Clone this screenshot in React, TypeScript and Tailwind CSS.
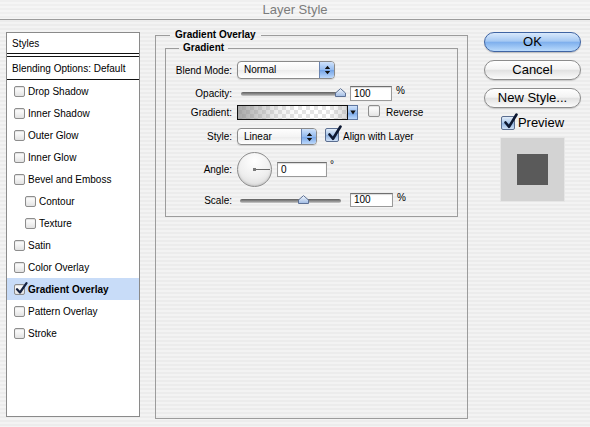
import React from "react";

function SmallCheck({ checked = false }: { checked?: boolean }) {
  return (
    <span className="relative inline-block h-[11px] w-[11px] shrink-0 rounded-[2px] border border-[#8d8d8d] bg-[linear-gradient(to_bottom,#ffffff,#f2f2f2_50%,#e2e2e2)] shadow-[inset_0_1px_1px_rgba(0,0,0,0.12)]">
      {checked && (
        <svg className="absolute left-[0px] top-[-3px]" width="13" height="13" viewBox="0 0 13 13">
          <path d="M2 7.2 L5 10.5 L11.5 1.2" fill="none" stroke="#14213f" strokeWidth="2.2" strokeLinecap="round" strokeLinejoin="round" />
        </svg>
      )}
    </span>
  );
}

function BigCheck({ checked = false }: { checked?: boolean }) {
  if (!checked) {
    return (
      <span className="inline-block h-[12px] w-[12px] shrink-0 rounded-[2px] border border-[#8d8d8d] bg-[linear-gradient(to_bottom,#ffffff,#f3f3f3_50%,#e3e3e3)] shadow-[inset_0_1px_1px_rgba(0,0,0,0.12)]" />
    );
  }
  return (
    <span className="relative inline-block h-[14px] w-[14px] shrink-0 rounded-[2px] border border-[#5b6e90] bg-[linear-gradient(to_bottom,#e3edf9,#a9c6ea_50%,#8fb3e1_51%,#cfe0f6)]">
      <svg className="absolute left-[1px] top-[-4px]" width="15" height="16" viewBox="0 0 15 16">
        <path d="M2.5 9.5 L6 13.8 L13.5 1.5" fill="none" stroke="#0d1832" strokeWidth="2.6" strokeLinecap="round" strokeLinejoin="round" />
      </svg>
    </span>
  );
}

function Stepper() {
  return (
    <span className="flex w-[15px] items-center justify-center border-l border-[#6a84b0] bg-[linear-gradient(to_bottom,#cfe2fb,#94bbef_50%,#74a4e7_51%,#bcd8fb)]">
      <svg width="7" height="10" viewBox="0 0 7 10">
        <path d="M3.5 0.8 L6.2 4 H0.8 Z M3.5 9.2 L6.2 6 H0.8 Z" fill="#111" />
      </svg>
    </span>
  );
}

function Thumb() {
  return (
    <svg width="11" height="9" viewBox="0 0 11 9">
      <defs>
        <linearGradient id="thumbg" x1="0" y1="0" x2="0" y2="1">
          <stop offset="0" stopColor="#f4f8fd" />
          <stop offset="1" stopColor="#9fbbe4" />
        </linearGradient>
      </defs>
      <path d="M0.5 8.5 V5 L5.5 0.6 L10.5 5 V8.5 Z" fill="url(#thumbg)" stroke="#5d7196" strokeWidth="1" />
    </svg>
  );
}

function ListRow({
  label,
  checked = false,
  indent = false,
  selected = false,
}: {
  label: string;
  checked?: boolean;
  indent?: boolean;
  selected?: boolean;
}) {
  return (
    <div
      className={
        selected
          ? "flex h-[22px] items-center gap-[3px] bg-[#c8dcf8] pl-[7px] font-bold"
          : indent
          ? "flex h-[22px] items-center gap-[3px] pl-[18px]"
          : "flex h-[22px] items-center gap-[3px] pl-[7px]"
      }
    >
      <SmallCheck checked={checked} />
      <span>{label}</span>
    </div>
  );
}

export default function App() {
  return (
    <div className="flex h-[427px] w-[590px] flex-col overflow-hidden bg-[image:repeating-linear-gradient(to_bottom,#ececec_0px,#ececec_2px,#f3f3f3_2px,#f3f3f3_4px)] font-['Liberation_Sans',Arial,sans-serif] text-[10px] text-black">
      {/* Title bar */}
      <div className="h-[20px] shrink-0 border-b border-[#9c9c9c] bg-[image:repeating-linear-gradient(to_bottom,#efefef_0px,#efefef_2px,#f5f5f5_2px,#f5f5f5_4px)] text-center text-[13px] leading-[19px] text-[#7c7c7c]">
        Layer Style
      </div>

      <div className="flex items-start">
        {/* Styles list */}
        <div className="ml-[6px] mt-[12px] h-[385px] w-[134px] shrink-0 border border-[#8a8a8a] bg-white">
          <div className="flex h-[21px] items-center border-b border-[#111] pl-[5px]">Styles</div>
          <div className="flex h-[24px] items-center border-y border-[#111] pl-[5px] mt-[2px]">Blending Options: Default</div>
          <ListRow label="Drop Shadow" />
          <ListRow label="Inner Shadow" />
          <ListRow label="Outer Glow" />
          <ListRow label="Inner Glow" />
          <ListRow label="Bevel and Emboss" />
          <ListRow label="Contour" indent />
          <ListRow label="Texture" indent />
          <ListRow label="Satin" />
          <ListRow label="Color Overlay" />
          <ListRow label="Gradient Overlay" checked selected />
          <ListRow label="Pattern Overlay" />
          <ListRow label="Stroke" />
        </div>

        {/* Main panel */}
        <fieldset className="ml-[15px] mt-[9px] h-[390px] w-[313px] shrink-0 border border-[#9c9c9c]">
          <legend className="ml-[14px] px-[5px] text-[10px] font-bold leading-[12px]">Gradient Overlay</legend>
          <fieldset className="ml-[9px] mt-[1px] h-[175px] w-[293px] border border-[#9c9c9c]">
            <legend className="ml-[13px] px-[4px] text-[10px] font-bold leading-[12px]">Gradient</legend>
            <div className="flex flex-col pt-[7px]">
              {/* Blend mode */}
              <div className="flex h-[18px] items-center">
                <span className="w-[66px] text-right">Blend Mode:</span>
                <div className="ml-[5px] flex h-[18px] w-[98px] overflow-hidden rounded-[4px] border border-[#8a8a8a] bg-[linear-gradient(to_bottom,#ffffff,#f4f4f4_50%,#ececec_51%,#ffffff)] shadow-[0_1px_1px_rgba(0,0,0,0.12)]">
                  <span className="flex-1 pl-[6px] leading-[16px]">Normal</span>
                  <Stepper />
                </div>
              </div>

              {/* Opacity */}
              <div className="mt-[7px] flex h-[15px] items-center">
                <span className="w-[66px] text-right">Opacity:</span>
                <div className="relative ml-[7px] h-[15px] w-[107px]">
                  <div className="absolute left-[2px] right-[6px] top-[6px] h-[4px] rounded-full bg-[linear-gradient(to_bottom,#5f5f5f,#959595_60%,#cdcdcd)]" />
                  <div className="absolute left-[96px] top-[2px] flex">
                    <Thumb />
                  </div>
                </div>
                <div className="ml-[4px] h-[15px] w-[42px] border border-[#9a9a9a] border-t-[#6f6f6f] bg-white pl-[3px] leading-[13px] shadow-[inset_0_1px_1px_rgba(0,0,0,0.15)]">100</div>
                <span className="ml-[4px] self-start leading-[10px]">%</span>
              </div>

              {/* Gradient */}
              <div className="mt-[4px] flex h-[15px] items-center">
                <span className="w-[66px] text-right">Gradient:</span>
                <div className="ml-[5px] flex h-[15px]">
                  <div className="h-[15px] w-[111px] border border-[#111] bg-[image:linear-gradient(to_right,rgba(140,140,140,0.75),rgba(160,160,160,0.2)_35%,rgba(160,160,160,0)_55%,rgba(160,160,160,0)_85%,rgba(140,140,140,0.35)),repeating-conic-gradient(#e4e4e4_0%_25%,#ffffff_0%_50%)] bg-[length:100%_100%,8px_8px]" />
                  <div className="flex h-[15px] w-[10px] items-center justify-center border border-l-0 border-[#5f77a0] bg-[linear-gradient(to_bottom,#cfe2fb,#94bbef_50%,#74a4e7_51%,#bcd8fb)]">
                    <svg width="6" height="5" viewBox="0 0 6 5">
                      <path d="M0.3 0.5 H5.7 L3 4.6 Z" fill="#111" />
                    </svg>
                  </div>
                </div>
                <span className="ml-[10px]">
                  <BigCheck />
                </span>
                <span className="ml-[6px]">Reverse</span>
              </div>

              {/* Style */}
              <div className="mt-[8px] flex h-[17px] items-center">
                <span className="w-[66px] text-right">Style:</span>
                <div className="ml-[5px] flex h-[17px] w-[80px] overflow-hidden rounded-[4px] border border-[#8a8a8a] bg-[linear-gradient(to_bottom,#ffffff,#f4f4f4_50%,#ececec_51%,#ffffff)] shadow-[0_1px_1px_rgba(0,0,0,0.12)]">
                  <span className="flex-1 pl-[6px] leading-[15px]">Linear</span>
                  <Stepper />
                </div>
                <span className="ml-[8px]">
                  <BigCheck checked />
                </span>
                <span className="ml-[4px]">Align with Layer</span>
              </div>

              {/* Angle */}
              <div className="mt-[7px] flex h-[35px] items-center">
                <span className="w-[66px] text-right">Angle:</span>
                <div className="relative ml-[5px] h-[35px] w-[35px] rounded-full border border-[#8c8c8c] bg-[radial-gradient(circle_at_50%_25%,#ffffff,#efefef_55%,#d4d4d4)] shadow-[inset_0_-1px_2px_rgba(0,0,0,0.12)]">
                  <svg className="absolute left-0 top-0" width="33" height="33" viewBox="0 0 33 33">
                    <line x1="16.5" y1="16.5" x2="32" y2="16.5" stroke="#6a6a6a" strokeWidth="1" />
                    <rect x="15" y="15" width="3" height="3" fill="#7a7a7a" />
                  </svg>
                </div>
                <div className="ml-[5px] h-[15px] w-[50px] border border-[#9a9a9a] border-t-[#6f6f6f] bg-white pl-[3px] leading-[13px] shadow-[inset_0_1px_1px_rgba(0,0,0,0.15)]">0</div>
                <span className="ml-[3px] mt-[-10px] leading-[10px]">°</span>
              </div>

              {/* Scale */}
              <div className="mt-[6px] flex h-[14px] items-center">
                <span className="w-[66px] text-right">Scale:</span>
                <div className="relative ml-[7px] h-[14px] w-[103px]">
                  <div className="absolute left-[1px] right-[1px] top-[6px] h-[4px] rounded-full bg-[linear-gradient(to_bottom,#5f5f5f,#959595_60%,#cdcdcd)]" />
                  <div className="absolute left-[59px] top-[2px] flex">
                    <Thumb />
                  </div>
                </div>
                <div className="ml-[8px] h-[14px] w-[43px] border border-[#9a9a9a] border-t-[#6f6f6f] bg-white pl-[3px] leading-[12px] shadow-[inset_0_1px_1px_rgba(0,0,0,0.15)]">100</div>
                <span className="ml-[4px] self-start leading-[10px]">%</span>
              </div>
            </div>
          </fieldset>
        </fieldset>

        {/* Buttons */}
        <div className="ml-[16px] mt-[12px] flex w-[97px] shrink-0 flex-col items-center">
          <button className="h-[20px] w-[97px] rounded-full border border-[#3f64a3] bg-[linear-gradient(to_bottom,#d9e9fc,#a6c9f3_45%,#7fb0ed_52%,#b9dafc)] text-[13px] leading-[18px] shadow-[0_1px_1px_rgba(0,0,0,0.2)]">
            OK
          </button>
          <button className="mt-[8px] h-[20px] w-[97px] rounded-full border border-[#8c8c8c] bg-[linear-gradient(to_bottom,#ffffff,#f3f3f3_45%,#e2e2e2_52%,#fbfbfb)] text-[13px] leading-[18px] shadow-[0_1px_1px_rgba(0,0,0,0.15)]">
            Cancel
          </button>
          <button className="mt-[8px] h-[20px] w-[97px] rounded-full border border-[#8c8c8c] bg-[linear-gradient(to_bottom,#ffffff,#f3f3f3_45%,#e2e2e2_52%,#fbfbfb)] text-[13px] leading-[18px] shadow-[0_1px_1px_rgba(0,0,0,0.15)]">
            New Style...
          </button>
          <div className="mt-[6px] flex h-[18px] items-center gap-[3px]">
            <BigCheck checked />
            <span className="text-[13px]">Preview</span>
          </div>
          <div className="mt-[5px] flex h-[65px] w-[65px] items-center justify-center border border-[#e6e6e6] bg-[#d3d3d3]">
            <div className="h-[31px] w-[31px] bg-[#5a5a5a]" />
          </div>
        </div>
      </div>
    </div>
  );
}
